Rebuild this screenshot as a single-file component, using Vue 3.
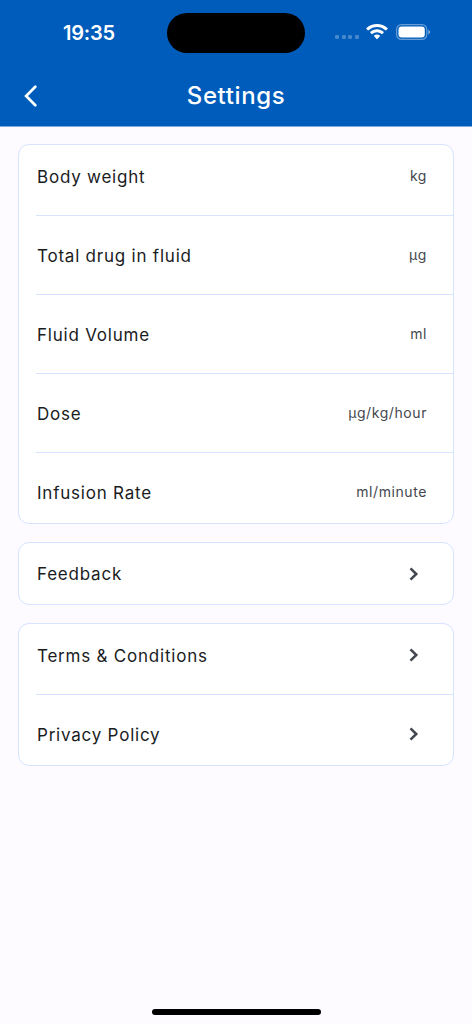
<template>
  <div class="screen">
    <header class="header">
      <div class="status">
        <span class="time">19:35</span>
        <span class="island"></span>
        <div class="indicators">
          <span class="dots"><i v-for="n in 4" :key="n"></i></span>
          <svg class="wifi" width="22" height="16" viewBox="0 0 22 16" fill="#fff">
            <path d="M11 0C7 0 3.300 1.500.500 4.100c-.3.300-.3.600 0 .9l1.300 1.300c.2.200.6.200.8 0C4.900 4.200 7.800 3 11 3s6.100 1.200 8.400 3.300c.2.200.6.200.8 0L21.500 5c.3-.3.300-.6 0-.9C18.700 1.500 15 0 11 0Z" />
            <path d="M11 5.300c-2.500 0-4.800.900-6.600 2.500-.3.300-.3.600 0 .9l1.300 1.300c.2.200.6.200.8 0C7.700 8.900 9.300 8.200 11 8.200s3.300.700 4.500 1.800c.2.200.6.200.8 0l1.300-1.300c.3-.3.300-.6 0-.9C15.800 6.200 13.500 5.300 11 5.300Z" />
            <path d="M11 10.400c-1.100 0-2.100.400-2.900 1-.3.300-.3.600 0 .9l2.500 2.700c.2.200.6.200.8 0l2.500-2.700c.3-.3.300-.6 0-.9-.8-.6-1.800-1-2.900-1Z" />
          </svg>
          <svg class="battery" width="35" height="16" viewBox="0 0 35 16" fill="none">
            <rect x=".6" y=".6" width="30.200" height="14.800" rx="4.800" stroke="#fff" stroke-opacity=".4" stroke-width="1.200" />
            <rect x="2.500" y="2.500" width="26.300" height="11" rx="3.200" fill="#fff" />
            <path d="M32.300 5.700v4.800c1.100-.4 1.800-1.300 1.800-2.400s-.7-2-1.800-2.400Z" fill="#fff" fill-opacity=".5" />
          </svg>
        </div>
      </div>
      <div class="bar">
        <button class="back" type="button" aria-label="Back">
          <svg width="14" height="22" viewBox="0 0 14 22" fill="none">
            <path d="M12.300 1.800 3.100 11l9.200 9.200" stroke="#fff" stroke-width="2.700" stroke-linecap="round" />
          </svg>
        </button>
        <h1 class="title">Settings</h1>
      </div>
    </header>

    <main class="content">
      <section v-for="(group, i) in groups" :key="i" class="card" :class="{ single: group.length === 1 }">
        <div v-for="item in group" :key="item.label" class="row">
          <span class="label">{{ item.label }}</span>
          <span v-if="item.unit" class="unit">{{ item.unit }}</span>
          <svg v-else class="chevron" width="10" height="14" viewBox="0 0 10 14" fill="none">
            <path d="M1.500 1.300 7.300 7 1.500 12.700" stroke="#43474e" stroke-width="2.500" />
          </svg>
        </div>
      </section>
    </main>

    <div class="home"></div>
  </div>
</template>

<script setup>
const groups = [
  [
    { label: "Body weight", unit: "kg" },
    { label: "Total drug in fluid", unit: "µg" },
    { label: "Fluid Volume", unit: "ml" },
    { label: "Dose", unit: "µg/kg/hour" },
    { label: "Infusion Rate", unit: "ml/minute" },
  ],
  [{ label: "Feedback" }],
  [{ label: "Terms & Conditions" }, { label: "Privacy Policy" }],
];
</script>

<style>
body {
  margin: 0;
  background: #fdfbff;
}
</style>

<style scoped>
.screen {
  display: flex;
  flex-direction: column;
  width: 472px;
  height: 1024px;
  overflow: hidden;
  background: #fdfbff;
  color: #1a1c1e;
  font-family: Inter, "Liberation Sans", sans-serif;
}
.header {
  height: 127px;
  background: #005cbb;
  border-bottom: 1px solid #7ba9dc;
  box-sizing: border-box;
  color: #fff;
}
.status {
  display: grid;
  grid-template-columns: 167px 138px 1fr;
  align-items: center;
  height: 65px;
}
.time {
  padding-left: 63px;
  font-size: 20px;
  font-weight: 600;
  letter-spacing: -0.2px;
}
.island {
  height: 40.500px;
  margin-top: 1px;
  border-radius: 21px;
  background: #000;
}
.indicators {
  display: flex;
  align-items: center;
  padding-left: 30px;
}
.dots {
  display: flex;
  gap: 2.600px;
  margin: 9px 7.500px 0 0;
}
.dots i {
  width: 4px;
  height: 4px;
  border-radius: 1.300px;
  background: rgba(255, 255, 255, 0.27);
}
.wifi { margin-top: -1px; }
.battery { margin: -1px 0 0 7.500px; }
.bar {
  display: grid;
  grid-template-columns: 62px 1fr 62px;
  align-items: center;
  height: 61px;
}
.back {
  display: flex;
  padding: 0 0 0 23px;
  border: none;
  background: transparent;
}
.title {
  margin: 0;
  font-size: 24px;
  font-weight: 550;
  letter-spacing: 0.6px;
  text-align: center;
}
.content {
  display: flex;
  flex: 1;
  flex-direction: column;
  gap: 18px;
  padding: 17px 18px;
}
.card {
  border: 1px solid #d7e3ff;
  border-radius: 11px;
  background: #fff;
}
.row {
  display: flex;
  align-items: center;
  justify-content: space-between;
  height: 62px;
  padding: 0 26px 0 18px;
}
.row + .row {
  position: relative;
  margin-top: 17px;
}
.row + .row::before {
  content: "";
  position: absolute;
  top: -9px;
  right: 0;
  left: 17px;
  height: 1px;
  background: #d7e3ff;
}
.label {
  padding-top: 1px;
  font-size: 17px;
  letter-spacing: 0.780px;
}
.single .row { height: 61px; }
.single .label { padding-top: 0; }
.unit {
  margin-top: -1px;
  color: #43474e;
  font-size: 14px;
  letter-spacing: 0.580px;
}
.chevron { margin-right: 8px; }
.home {
  align-self: center;
  width: 169px;
  height: 6px;
  margin-bottom: 9px;
  border-radius: 3px;
  background: #000;
}
</style>
